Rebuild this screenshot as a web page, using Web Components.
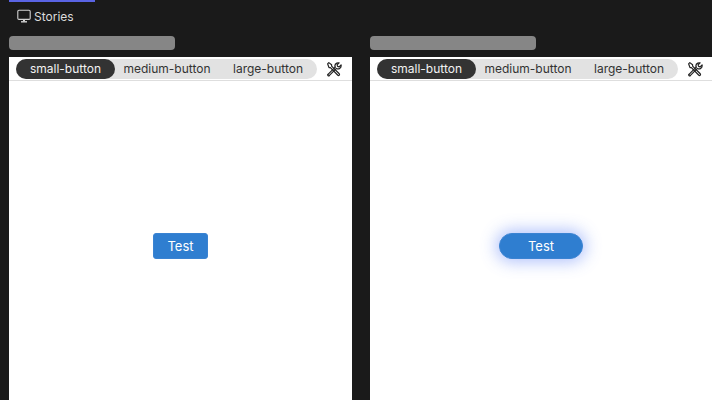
<!DOCTYPE html>
<html>
<head>
<meta charset="utf-8">
<style>
    html, body { margin: 0; height: 400px; overflow: hidden; background: #1a1a1a; font-family: Inter, "Liberation Sans", sans-serif; }
</style>
</head>
<body>
<story-page></story-page>
<script>
class TopBar extends HTMLElement {
    constructor() {
        super();
        this.attachShadow({ mode: "open" });
        this.shadowRoot.innerHTML = `
            <style>
                :host { display: block; height: 36px; }
                .tab {
                    display: flex; align-items: center; gap: 3px;
                    width: 86px; height: 30px; box-sizing: border-box;
                    margin-left: 9px; padding-left: 8px;
                    border-top: 2px solid #5a64e4;
                    color: #dcdcdc; font-size: 12px;
                }
                svg { width: 14px; height: 14px; }
            </style>
            <div class="tab">
                <svg viewBox="0 0 14 14" fill="none" stroke="#d2d2d2" stroke-width="1.1">
                    <rect x="0.8" y="1.2" width="12.4" height="9.2" rx="1.2"/>
                    <path d="M4 12.8h6" stroke-width="1.4"/>
                    <path d="M7 10.5v2" stroke-width="2"/>
                </svg>
                <slot></slot>
            </div>
        `;
    }
}

class SegmentTabs extends HTMLElement {
    constructor() {
        super();
        this.attachShadow({ mode: "open" });
        this.shadowRoot.innerHTML = `
            <style>
                :host {
                    display: flex; height: 20px; width: 301px;
                    background: #e2e2e2; border-radius: 10px;
                    font-size: 12px; color: #333;
                }
                span { display: flex; align-items: center; justify-content: center; }
                .on { width: 99px; background: #333; color: #f2f2f2; border-radius: 10px; }
                .mid { width: 104px; }
                .big { width: 98px; }
            </style>
            <span class="on">small-button</span>
            <span class="mid">medium-button</span>
            <span class="big">large-button</span>
        `;
    }
}

class StoryPanel extends HTMLElement {
    constructor() {
        super();
        this.attachShadow({ mode: "open" });
        this.shadowRoot.innerHTML = `
            <style>
                :host { display: block; width: 343px; flex: none; }
                .label { width: 166px; height: 14px; border-radius: 4px; background: #868686; margin-bottom: 7px; }
                .frame { background: #fff; }
                .toolbar {
                    display: flex; align-items: center; height: 24px;
                    padding-left: 7px; box-sizing: border-box;
                    border-bottom: 1px solid #dedede;
                }
                .tools { margin-left: 9px; width: 16px; height: 16px; }
                .stage { height: 330px; display: flex; align-items: center; justify-content: center; }
            </style>
            <div class="label"></div>
            <div class="frame">
                <div class="toolbar">
                    <segment-tabs></segment-tabs>
                    <svg class="tools" viewBox="0 0 16 16" fill="none" stroke="#222" stroke-width="1.2" stroke-linecap="round" stroke-linejoin="round">
                        <path d="M2 13.4l7.2-7.2"/>
                        <path d="M3.2 14.6l7.2-7.2"/>
                        <path d="M2 13.4c-.4.5-.3.9 0 1.2s.8.4 1.2 0"/>
                        <path d="M9.2 6.2c-.6-1.6.1-3.4 1.6-4.1.9-.4 1.7-.4 2.3-.2l-2 2 .5 1.5 1.5.5 2-2c.2 1.3-.2 2.6-1.2 3.3-1 .8-2.1.9-3.1.5"/>
                        <path d="M1.6 2.8l1.2-1.2 2.8 2.2v1.3l7.4 7.4c.6.6.7 1.2.3 1.7-.5.5-1.1.4-1.7-.2L4.4 6.6H3z"/>
                    </svg>
                </div>
                <div class="stage"><slot></slot></div>
            </div>
        `;
    }
}

class TestButton extends HTMLElement {
    constructor() {
        super();
        this.attachShadow({ mode: "open" });
        this.shadowRoot.innerHTML = `
            <style>
                :host {
                    display: flex; align-items: center; justify-content: center;
                    width: 55px; height: 26px; box-sizing: border-box;
                    background: #2f7ed0; border: 1px solid #3a83d2; border-radius: 3px;
                    color: #fff; font-size: 13px; font-weight: 400;
                }
                :host([glow]) {
                    width: 84px; margin-right: 1px; border-radius: 13px;
                    box-shadow: 0 0 16px 3px rgba(70, 110, 245, 0.42);
                }
            </style>
            <slot></slot>
        `;
    }
}

class StoryPage extends HTMLElement {
    constructor() {
        super();
        this.attachShadow({ mode: "open" });
        this.shadowRoot.innerHTML = `
            <style>
                :host { display: block; }
                .panels { display: flex; gap: 18px; padding-left: 9px; }
            </style>
            <top-bar>Stories</top-bar>
            <div class="panels">
                <story-panel><test-button>Test</test-button></story-panel>
                <story-panel><test-button glow>Test</test-button></story-panel>
            </div>
        `;
    }
}

customElements.define("top-bar", TopBar);
customElements.define("segment-tabs", SegmentTabs);
customElements.define("story-panel", StoryPanel);
customElements.define("test-button", TestButton);
customElements.define("story-page", StoryPage);
</script>
</body>
</html>
